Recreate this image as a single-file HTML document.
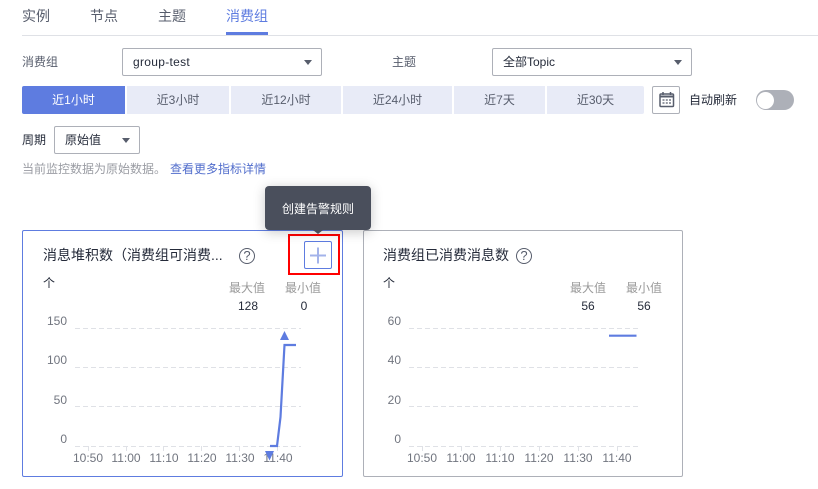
<!DOCTYPE html>
<html lang="zh"><head><meta charset="utf-8"><style>
*{box-sizing:border-box;margin:0;padding:0}
html,body{width:818px;height:489px;overflow:hidden;background:#fff}
body{position:relative;font:12px/16px "Liberation Sans","Noto Sans CJK SC",sans-serif;color:#252b3a}
.a{position:absolute;white-space:nowrap}
.c{text-align:center}
.sel{position:absolute;height:28px;border:1px solid #adb0b8;border-radius:2px;line-height:26px;padding-left:10px;background:#fff}
.sel i{position:absolute;right:9px;top:11px;width:0;height:0;border-left:4px solid transparent;border-right:4px solid transparent;border-top:5px solid #575d6c}
.b{position:absolute;top:86px;height:28px;background:#e8ebf7;line-height:28px;text-align:center;color:#575d6c}
.g{color:#9a9a9a}
.q{width:16px;height:16px;border:1.500px solid #575d6c;border-radius:50%;line-height:13px;color:#575d6c;font-size:13px}
.t{font-size:14px;line-height:18px}
svg{position:absolute;left:0;top:0}
svg text{font:12px "Liberation Sans",sans-serif;fill:#71757f}
</style></head><body>
<div class="a" style="left:22px;top:7px;color:#575d6c;font-size:14px;line-height:18px">实例</div>
<div class="a" style="left:90px;top:7px;color:#575d6c;font-size:14px;line-height:18px">节点</div>
<div class="a" style="left:158px;top:7px;color:#575d6c;font-size:14px;line-height:18px">主题</div>
<div class="a" style="left:226px;top:7px;color:#5e7ce0;font-size:14px;line-height:18px">消费组</div>
<div class="a" style="left:22px;top:35px;width:796px;height:1px;background:#dfe1e6"></div>
<div class="a" style="left:226px;top:32px;width:42px;height:3px;background:#5e7ce0"></div>

<div class="a" style="left:22px;top:54px;color:#575d6c">消费组</div>
<div class="sel" style="left:122px;top:48px;width:200px"><span style="letter-spacing:.3px">group-test</span><i></i></div>
<div class="a" style="left:392px;top:54px;color:#575d6c">主题</div>
<div class="sel" style="left:492px;top:48px;width:200px">全部Topic<i></i></div>

<div class="b" style="left:22px;width:103px;background:#5e7ce0;color:#fff;border-radius:2px 0 0 2px">近1小时</div>
<div class="b" style="left:127px;width:102px">近3小时</div>
<div class="b" style="left:231px;width:110px">近12小时</div>
<div class="b" style="left:343px;width:109px">近24小时</div>
<div class="b" style="left:454px;width:91px">近7天</div>
<div class="b" style="left:547px;width:97px;border-radius:0 2px 2px 0">近30天</div>
<div class="a" style="left:652px;top:86px;width:28px;height:28px;border:1px solid #adb0b8;border-radius:2px"></div>
<svg width="818" height="489" viewBox="0 0 818 489" style="z-index:1">
<rect x="660" y="94" width="13.500" height="12.500" rx="1" fill="none" stroke="#575d6c" stroke-width="1.500"/>
<path d="M660 96.500h13.500" stroke="#575d6c" stroke-width="2" fill="none"/>
<path d="M663 92v3M670.500 92v3" stroke="#575d6c" stroke-width="1.500" fill="none"/>
<path d="M662.500 100h2M665.800 100h2M669 100h2M662.500 103h2M665.800 103h2M669 103h2" stroke="#575d6c" stroke-width="1.300" fill="none"/>
</svg>
<div class="a" style="left:689px;top:92px">自动刷新</div>
<div class="a" style="left:756px;top:90px;width:38px;height:20px;border-radius:10px;background:#adb0b8"></div>
<div class="a" style="left:757px;top:91.500px;width:17px;height:17px;border-radius:50%;background:#fff"></div>

<div class="a" style="left:22px;top:132px">周期</div>
<div class="sel" style="left:54px;top:126px;width:86px">原始值<i></i></div>
<div class="a" style="left:22px;top:161px;color:#9a9ca3">当前监控数据为原始数据。</div>
<div class="a" style="left:170px;top:161px;color:#526ecc">查看更多指标详情</div>

<!-- card 1 -->
<div class="a" style="left:22px;top:230px;width:321px;height:247px;border:1px solid #5e7ce0;border-radius:2px"></div>
<div class="a t" style="left:43px;top:246px">消息堆积数（消费组可消费...</div>
<div class="a c q" style="left:239px;top:248px">?</div>
<div class="a" style="left:43px;top:275px">个</div>
<div class="a g" style="left:229px;top:280px">最大值</div>
<div class="a g" style="left:285px;top:280px">最小值</div>
<div class="a c" style="left:230px;top:298px;width:36px">128</div>
<div class="a c" style="left:286px;top:298px;width:36px">0</div>
<div class="a" style="left:288px;top:234px;width:52px;height:41px;border:2px solid #f00"></div>
<div class="a" style="left:304px;top:241px;width:28px;height:28px;border:1px solid #5e7ce0;border-radius:2px"></div>

<!-- card 2 -->
<div class="a" style="left:363px;top:230px;width:320px;height:247px;border:1px solid #adb0b8;border-radius:2px"></div>
<div class="a t" style="left:383px;top:246px">消费组已消费消息数</div>
<div class="a c q" style="left:516px;top:248px">?</div>
<div class="a" style="left:383px;top:275px">个</div>
<div class="a g" style="left:570px;top:280px">最大值</div>
<div class="a g" style="left:626px;top:280px">最小值</div>
<div class="a c" style="left:570px;top:298px;width:36px">56</div>
<div class="a c" style="left:626px;top:298px;width:36px">56</div>

<svg width="818" height="489" viewBox="0 0 818 489">
<path d="M310 255.500h16M318 247.500v16" stroke="#a3b3ea" stroke-width="2" fill="none"/>
<g stroke="#dfe1e6" fill="none">
<path stroke-dasharray="5 3" d="M75 328.500h226M75 367.500h226M75 406.500h226M75 446.500h226"/>
<path d="M88.500 446v5M126.500 446v5M163.500 446v5M201.500 446v5M239.500 446v5M277.500 446v5"/>
<path stroke-dasharray="5 3" d="M409 328.500h232M409 367.500h232M409 406.500h232M409 446.500h232"/>
<path d="M422.500 446v5M461.500 446v5M500.500 446v5M539.500 446v5M578.500 446v5M617.500 446v5"/>
</g>
<g text-anchor="end">
<text x="67" y="325">150</text><text x="67" y="364">100</text><text x="67" y="404">50</text><text x="67" y="443">0</text>
<text x="401" y="325">60</text><text x="401" y="364">40</text><text x="401" y="404">20</text><text x="401" y="443">0</text>
</g>
<g text-anchor="middle">
<text x="88" y="462">10:50</text><text x="126" y="462">11:00</text><text x="164" y="462">11:10</text><text x="202" y="462">11:20</text><text x="240" y="462">11:30</text><text x="278" y="462">11:40</text>
<text x="422" y="462">10:50</text><text x="461" y="462">11:00</text><text x="500" y="462">11:10</text><text x="539" y="462">11:20</text><text x="578" y="462">11:30</text><text x="617" y="462">11:40</text>
</g>
<path d="M270 446h7L280.500 417 284.500 345h11.500" fill="none" stroke="#5e7ce0" stroke-width="2.200"/>
<path d="M284.500 331l4.500 9h-9zM269.500 460.500l-4.500-9.500h9z" fill="#5e7ce0"/>
<path d="M609 335.700h27.500" fill="none" stroke="#5e7ce0" stroke-width="2.200"/>
</svg>

<!-- tooltip -->
<div class="a c" style="left:265px;top:186px;width:106px;height:44px;background:#4a4f5c;border-radius:4px;color:#fff;line-height:46px;box-shadow:0 2px 12px rgba(0,0,0,.22);z-index:2">创建告警规则</div>
<div class="a" style="left:313px;top:230px;width:0;height:0;border-left:5px solid transparent;border-right:5px solid transparent;border-top:4px solid #4a4f5c;z-index:2"></div>
</body></html>
